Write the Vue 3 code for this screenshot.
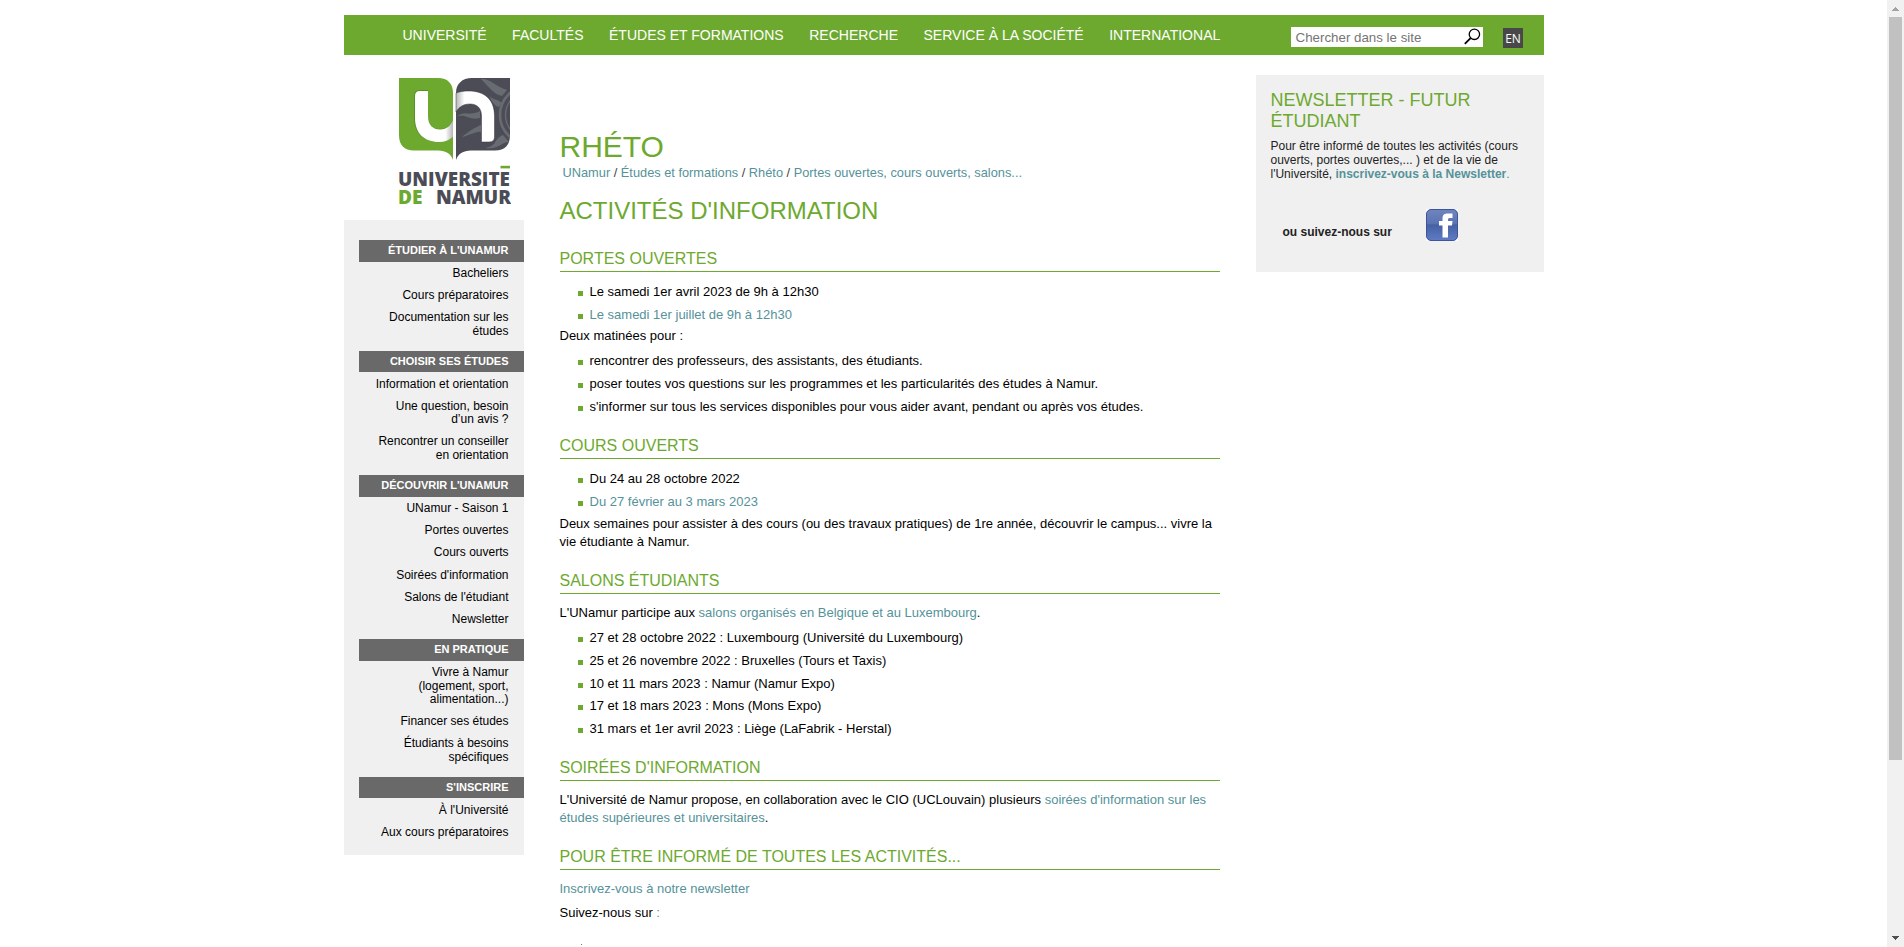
<script setup>
const nav = [
  'UNIVERSITÉ',
  'FACULTÉS',
  'ÉTUDES ET FORMATIONS',
  'RECHERCHE',
  'SERVICE À LA SOCIÉTÉ',
  'INTERNATIONAL',
]

const menu = [
  { title: "ÉTUDIER À L'UNAMUR", items: ['Bacheliers', 'Cours préparatoires', 'Documentation sur les études'] },
  {
    title: 'CHOISIR SES ÉTUDES',
    items: ['Information et orientation', "Une question, besoin d’un avis ?", 'Rencontrer un conseiller en orientation'],
  },
  {
    title: "DÉCOUVRIR L'UNAMUR",
    items: ['UNamur - Saison 1', 'Portes ouvertes', 'Cours ouverts', "Soirées d'information", "Salons de l'étudiant", 'Newsletter'],
  },
  {
    title: 'EN PRATIQUE',
    items: ['Vivre à Namur (logement, sport, alimentation...)', 'Financer ses études', 'Étudiants à besoins spécifiques'],
  },
  { title: "S'INSCRIRE", items: ["À l'Université", 'Aux cours préparatoires'] },
]

const fairs = [
  '27 et 28 octobre 2022 : Luxembourg (Université du Luxembourg)',
  '25 et 26 novembre 2022 : Bruxelles (Tours et Taxis)',
  '10 et 11 mars 2023 : Namur (Namur Expo)',
  '17 et 18 mars 2023 : Mons (Mons Expo)',
  '31 mars et 1er avril 2023 : Liège (LaFabrik - Herstal)',
]
</script>

<template>
  <div class="viewport">
    <div class="page">
      <header class="topbar">
        <nav class="nav">
          <a v-for="n in nav" :key="n">{{ n }}</a>
        </nav>
        <div class="search">
          <span>Chercher dans le site</span>
          <svg width="17" height="17" viewBox="0 0 17 17" fill="none" stroke="#000">
            <circle cx="10.4" cy="6.3" r="5.2" stroke-width="1.3" />
            <path d="M6.6 10.2 L0.800 15.8" stroke-width="1.8" />
          </svg>
        </div>
        <a class="lang">EN</a>
      </header>

      <div class="columns">
        <aside class="left">
          <svg class="logo" width="112" height="128" viewBox="0 0 112 128">
            <defs>
              <linearGradient id="foldU" x1="0" x2="1" y1="0" y2="0">
                <stop offset="0.8" stop-color="#fff" />
                <stop offset="1" stop-color="#b5b5b8" />
              </linearGradient>
              <linearGradient id="foldN" x1="0" x2="1" y1="0" y2="0">
                <stop offset="0" stop-color="#b5b5b8" />
                <stop offset="0.22" stop-color="#fff" />
              </linearGradient>
              <clipPath id="leaf">
                <path d="M111 0 H73 C63 0 57 6 57 15 V82 C59 76 64 72.5 72 72.5 H96 C106 72.5 111 67 111 57 Z" />
              </clipPath>
            </defs>
            <path d="M0 0 H39 C49 0 54 6 54 15 V82 C52 76 47 72.5 39 72.5 H15 C5 72.5 0 67 0 57 Z" fill="#6da92e" />
            <g clip-path="url(#leaf)">
              <rect x="56" width="56" height="84" fill="#4b4c55" />
              <g fill="none" stroke="#686b72">
                <circle cx="130" cy="37" r="29" stroke-width="2.6" />
                <circle cx="130" cy="37" r="23.5" stroke-width="1.4" />
              </g>
              <g fill="#686b72">
                <path d="M82 1 C91 0 96 8 108 12 L103 18 C94 16 90 9 82 1Z" />
                <path d="M90 18 C95 22 98 21 103 25 L100 29 C95 28 93 23 90 18Z" />
                <path d="M57 39 C66 31 70 39 81 33 V40 C70 43 67 35 57 39Z" />
                <path d="M63 59 C70 53 77 49 82 47 V54 C77 53 70 58 63 59Z" />
                <path d="M86 70 C99 68 94 61 104 57 L110 64 C102 64 100 72 86 70Z" />
              </g>
            </g>
            <path d="M15 18 Q15 12 21 12 H29 V38 C29 47 34 51 41 51 C48 51 52 47 54 41 V59 C50 62 46 64 40 64 C24 64 15 55 15 40Z" fill="#57902a" />
            <path d="M16 18 Q16 13 21 13 H29 V38 C29 47 34 51.5 41 51.5 C48 51.5 52 47 54 42 V59 C50 62 46 64 40 64 C25 64 16 55 16 40Z" fill="url(#foldU)" />
            <path d="M57 15 C61 13.5 65 13 70 13 C86 13 95.5 22 95.5 38 V59 Q95.5 64 90 64 H82.5 V38 C82.5 30 78 26 71 26 C64 26 60 29 57 34Z" fill="url(#foldN)" stroke="#34353c" stroke-width="0.5" />
            <g class="wordmark" fill="#4b4c55">
              <text x="-1" y="107.5" textLength="112" lengthAdjust="spacingAndGlyphs">UNIVERSITE</text>
              <text x="-1" y="125.5" textLength="24.500" lengthAdjust="spacingAndGlyphs" fill="#6da92e">DE</text>
              <text x="37" y="125.5" textLength="75" lengthAdjust="spacingAndGlyphs">NAMUR</text>
            </g>
            <rect x="101.500" y="87.800" width="9.500" height="2.600" fill="#6da92e" />
          </svg>

          <div class="menu">
            <section v-for="m in menu" :key="m.title">
              <h4>{{ m.title }}</h4>
              <ul>
                <li v-for="i in m.items" :key="i">{{ i }}</li>
              </ul>
            </section>
          </div>
        </aside>

        <main class="main">
          <h1>RHÉTO</h1>
          <div class="crumbs">
            <a>UNamur</a> / <a>Études et formations</a> / <a>Rhéto</a> / <a>Portes ouvertes, cours ouverts, salons...</a>
          </div>
          <h2>ACTIVITÉS D'INFORMATION</h2>

          <section class="open-days">
            <h3>PORTES OUVERTES</h3>
            <ul>
              <li>Le samedi 1er avril 2023 de 9h à 12h30</li>
              <li><a>Le samedi 1er juillet de 9h à 12h30</a></li>
            </ul>
            <p>Deux matinées pour :</p>
            <ul>
              <li>rencontrer des professeurs, des assistants, des étudiants.</li>
              <li>poser toutes vos questions sur les programmes et les particularités des études à Namur.</li>
              <li>s'informer sur tous les services disponibles pour vous aider avant, pendant ou après vos études.</li>
            </ul>
          </section>

          <section>
            <h3>COURS OUVERTS</h3>
            <ul>
              <li>Du 24 au 28 octobre 2022</li>
              <li><a>Du 27 février au 3 mars 2023</a></li>
            </ul>
            <p>
              Deux semaines pour assister à des cours (ou des travaux pratiques) de 1re année, découvrir le campus...
              vivre la vie étudiante à Namur.
            </p>
          </section>

          <section>
            <h3>SALONS ÉTUDIANTS</h3>
            <p>L'UNamur participe aux <a>salons organisés en Belgique et au Luxembourg</a>.</p>
            <ul>
              <li v-for="f in fairs" :key="f">{{ f }}</li>
            </ul>
          </section>

          <section>
            <h3>SOIRÉES D'INFORMATION</h3>
            <p>
              L'Université de Namur propose, en collaboration avec le CIO (UCLouvain) plusieurs
              <a>soirées d'information sur les études supérieures et universitaires</a>.
            </p>
          </section>

          <section>
            <h3>POUR ÊTRE INFORMÉ DE TOUTES LES ACTIVITÉS...</h3>
            <p><a>Inscrivez-vous à notre newsletter</a></p>
            <p>Suivez-nous sur <a>:</a></p>
            <i class="speck"></i>
          </section>
        </main>

        <aside class="right">
          <h2>NEWSLETTER - FUTUR ÉTUDIANT</h2>
          <p>
            Pour être informé de toutes les activités (cours ouverts, portes ouvertes,... ) et de la vie de
            l'Université, <a>inscrivez-vous à la Newsletter</a><a class="stop">.</a>
          </p>
          <div class="follow">
            <strong>ou suivez-nous sur</strong>
            <svg width="32" height="32" viewBox="0 0 32 32">
              <defs>
                <linearGradient id="fb" x1="0" x2="0" y1="0" y2="1">
                  <stop offset="0" stop-color="#6f85bd" />
                  <stop offset="0.45" stop-color="#5a73b3" />
                  <stop offset="0.5" stop-color="#4660a4" />
                  <stop offset="1" stop-color="#5f7cc4" />
                </linearGradient>
              </defs>
              <rect width="32" height="32" fill="#fff" />
              <rect x="0.500" y="0.500" width="31" height="31" rx="4.500" fill="url(#fb)" stroke="#3d559b" />
              <path d="M16.500 28.500 V16.500 H13 V12 H16.500 V9.500 C16.500 5.800 18.500 4.500 22 4.500 H26.500 V9 H24 C22.500 9 22 9.500 22 10.800 V12 H26.500 L26 16.500 H22 V28.500 Z" fill="#fff" />
            </svg>
          </div>
        </aside>
      </div>
    </div>

    <div class="scrollbar">
      <svg width="7" height="4" viewBox="0 0 7 4" shape-rendering="crispEdges"><path d="M3.500 0 L7 4 H0Z" fill="#a3a3a3" /></svg>
      <div class="thumb"></div>
      <svg width="7" height="4" viewBox="0 0 7 4" shape-rendering="crispEdges"><path d="M0 0 H7 L3.500 4Z" fill="#505050" /></svg>
    </div>
  </div>
</template>

<style>
body {
  margin: 0;
  background: #fff;
}
</style>

<style scoped>
.viewport {
  display: flex;
  width: 1904px;
  height: 947px;
  overflow: hidden;
  font-family: Arial, 'Liberation Sans', sans-serif;
  font-size: 13px;
  line-height: 18px;
  color: #000;
}
.page {
  width: 1200px;
  margin: 15px auto 0;
}
h1, h2, h3, h4, p, ul {
  margin: 0;
  padding: 0;
  font-weight: normal;
}
ul {
  list-style: none;
}
a {
  color: #559299;
}
h1, h2, h3 {
  color: #6da92e;
}

.topbar {
  display: flex;
  height: 40px;
  background: #6da92e;
}
.nav {
  display: flex;
  gap: 25.5px;
  width: 888px;
  padding-left: 59px;
  white-space: nowrap;
}
.nav a {
  color: #fff;
  font-size: 14.03px;
  line-height: 40px;
}
.search {
  display: flex;
  justify-content: space-between;
  box-sizing: border-box;
  width: 192px;
  height: 20px;
  margin-top: 12px;
  padding: 0 2px 0 5px;
  background: #fff;
  color: #757575;
  font-size: 13.333px;
  line-height: 21px;
}
.search svg {
  margin-top: 1px;
}
.lang {
  box-sizing: border-box;
  width: 20px;
  height: 20px;
  margin: 13px 0 0 20px;
  padding-left: 1px;
  background: #48484a;
  color: #fff;
  font: 12px/21px 'Open Sans', sans-serif;
  text-align: center;
}

.columns {
  display: flex;
  align-items: flex-start;
}
.left {
  width: 180px;
}
.logo {
  display: block;
  margin: 23px 0 14px 55px;
}
.wordmark {
  font: 800 20px 'Open Sans', sans-serif;
}
.menu {
  box-sizing: border-box;
  height: 635px;
  padding: 20px 0 0 15px;
  background: #f0f0f0;
  text-align: right;
}
.menu section {
  margin-bottom: 8.7px;
}
.menu h4 {
  height: 21.5px;
  padding-right: 15px;
  background: #696969;
  color: #fff;
  font-size: 11px;
  font-weight: bold;
  line-height: 20px;
}
.menu li {
  padding: 4.45px 15px 4.45px 15px;
  font-size: 12px;
  line-height: 13.3px;
}
.menu li:first-child {
  padding-top: 5.4px;
}

.main {
  width: 660px;
  margin: 77px 36px 0;
}
.main h1 {
  font-size: 30px;
  line-height: 30px;
}
.crumbs {
  padding: 2px 0 0 3px;
  color: #444;
  font-size: 12.8px;
}
.main h2 {
  margin: 15px 0 24px;
  font-size: 24px;
  line-height: 28px;
}
.main section {
  margin-bottom: 20px;
}
.main h3 {
  margin-bottom: 10px;
  padding-bottom: 3px;
  border-bottom: 1px solid #6da92e;
  font-size: 16px;
  line-height: 19px;
}
.main h3 + ul {
  margin-top: 11px;
}
.main ul + p {
  margin-top: 4.25px;
}
.main .open-days {
  margin-bottom: 20.5px;
}
.main .open-days ul + p {
  margin-top: 3.25px;
}
.main p + ul {
  margin-top: 7px;
}
.main p + p {
  margin-top: 6px;
}
.main li {
  display: flex;
  align-items: flex-start;
  gap: 7px;
  padding-left: 18px;
}
.main li + li {
  margin-top: 4.75px;
}
.main li::before {
  content: '';
  width: 5px;
  height: 5px;
  margin-top: 8px;
  background: #6da92e;
}
.speck {
  display: block;
  width: 1px;
  height: 1px;
  margin: 22px 0 0 21px;
  background: #777;
}

.right {
  box-sizing: border-box;
  width: 288px;
  height: 197px;
  margin-top: 20px;
  padding: 15px 15px 0;
  background: #f0f0f0;
  color: #222;
}
.right h2 {
  margin-bottom: 7px;
  font-size: 18px;
  line-height: 21px;
}
.right p {
  font-size: 12px;
  line-height: 14px;
}
.right p a {
  font-weight: bold;
}
.right p .stop {
  font-weight: normal;
}
.follow {
  display: flex;
  gap: 34px;
  padding: 28px 0 0 12px;
  font-size: 12px;
}
.follow strong {
  width: 109px;
  padding-top: 14px;
  white-space: nowrap;
}

.scrollbar {
  display: flex;
  flex-direction: column;
  align-items: center;
  box-sizing: border-box;
  width: 17px;
  padding: 7px 0;
  background: #f1f1f1;
}
.thumb {
  width: 13px;
  height: 743px;
  margin: 6px 0 auto;
  background: #c1c1c1;
}
</style>
